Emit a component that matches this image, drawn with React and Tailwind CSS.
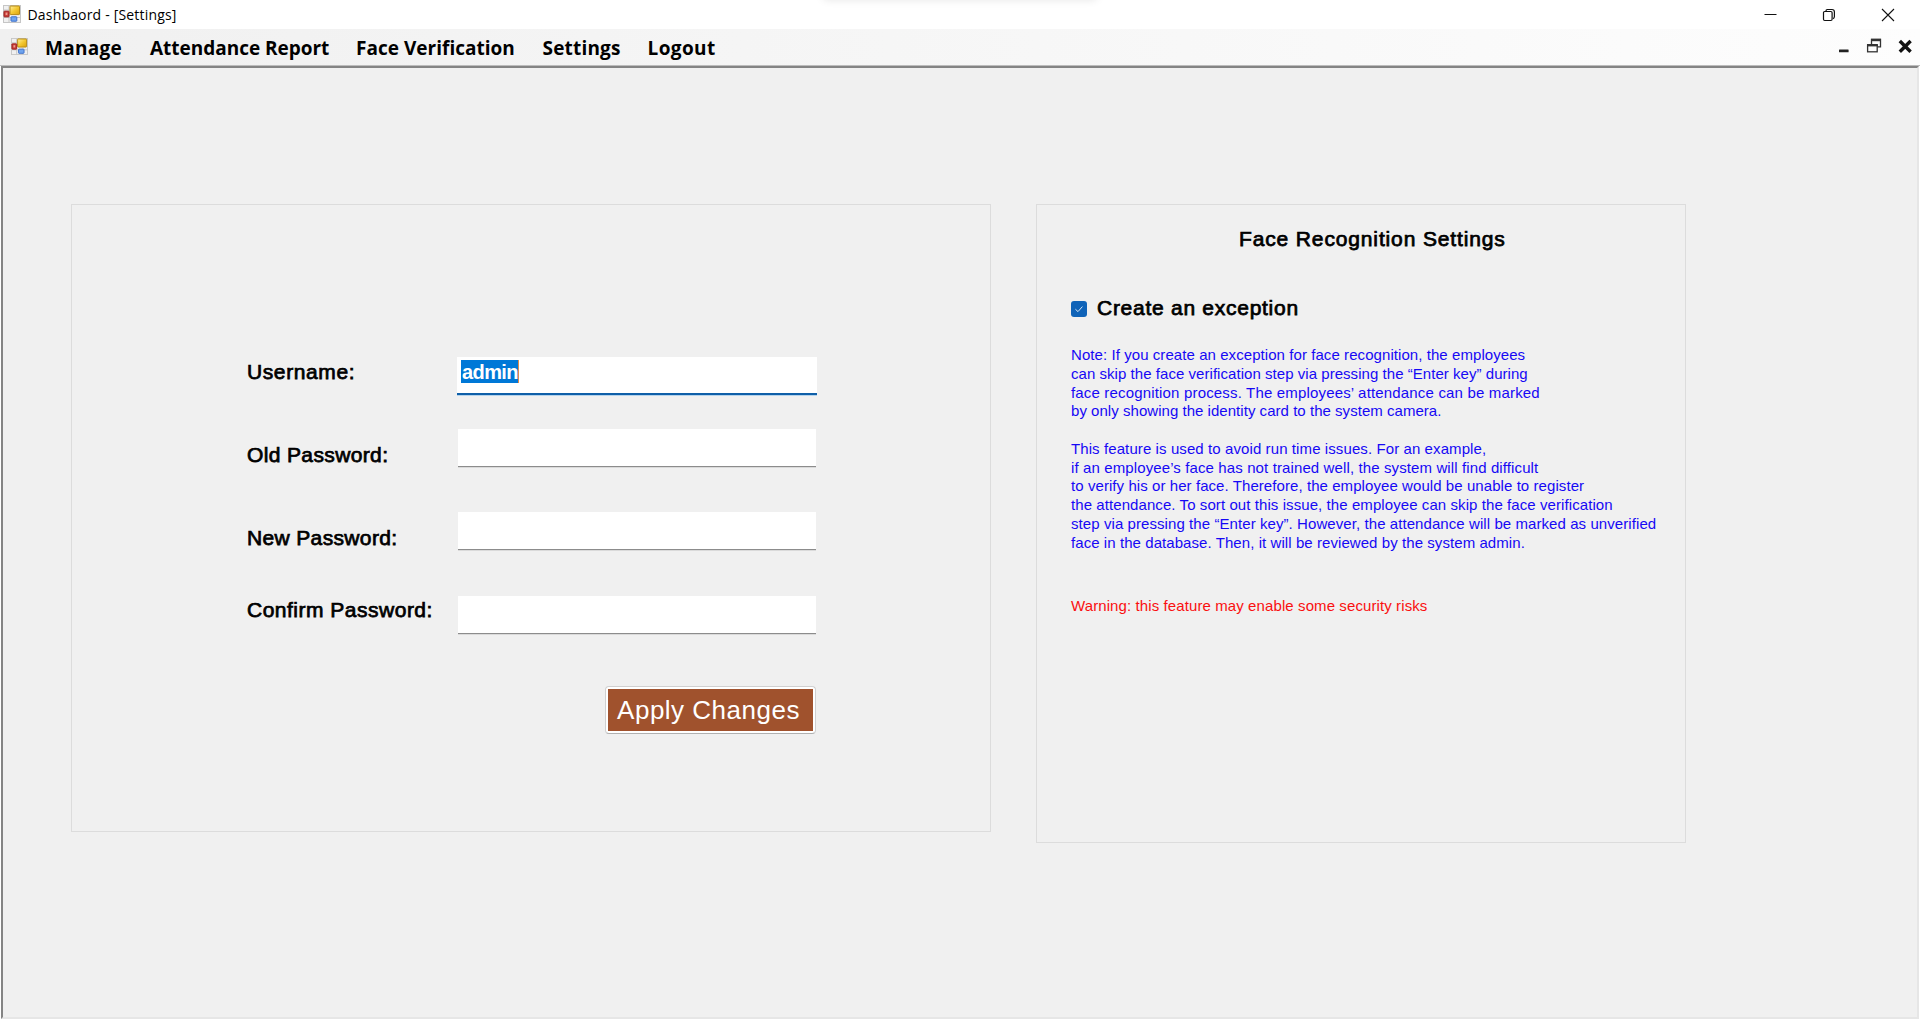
const FORM_TEXT =
  'font-["Liberation_Sans",Arial,sans-serif] text-[21px] leading-[30px] whitespace-pre [-webkit-text-stroke:0.75px_black]';

function FormIcon({ className }) {
  return (
    <svg viewBox="0 0 18 18" className={className}>
      <defs>
        <linearGradient id="gold" x1="0" y1="0" x2="1" y2="1">
          <stop offset="0" stopColor="#fff0a0" />
          <stop offset="0.5" stopColor="#f3c832" />
          <stop offset="1" stopColor="#d9a20c" />
        </linearGradient>
      </defs>
      <rect x="0.5" y="0.5" width="17" height="17" fill="#f0f0f0" stroke="#c6c6c6" />
      <path d="M6 0.5V17.5M12 11V17.5M0.5 12.5H17.5M0.5 5H7" stroke="#c6c6c6" fill="none" />
      <rect x="7" y="1" width="9.5" height="8.6" rx="0.6" fill="url(#gold)" stroke="#b78a12" />
      <rect x="1" y="6.2" width="5" height="5.6" rx="0.5" fill="#c8403a" stroke="#9e1f1f" />
      <rect x="2.6" y="7.6" width="1.8" height="2.4" fill="#ee9c90" />
      <rect x="8" y="11.8" width="5.8" height="4.4" rx="0.5" fill="#6fa4ee" stroke="#3b6fcb" />
    </svg>
  );
}

function TitleBar() {
  return (
    <header className="relative flex h-[29px] shrink-0 items-center overflow-hidden bg-white pl-[3px]">
      <div className="absolute top-[-12px] left-[822px] h-3 w-[276px] rounded-lg shadow-[0_0_8px_rgba(0,0,0,0.1)]" />
      <FormIcon className="mt-[-1px] h-[18px] w-[18px]" />
      <h1 className="ml-[6.5px] text-[14px] leading-[29px] tracking-[0.18px] whitespace-pre">Dashbaord - [Settings]</h1>
      <div className="ml-auto flex items-center pr-[25px]">
        <svg viewBox="0 0 14 14" className="mr-[45px] h-[14px] w-[14px]" fill="none" stroke="#111">
          <path d="M1.5 6.5H13.5" />
        </svg>
        <svg viewBox="0 0 14 14" className="mr-[45px] h-[14px] w-[14px]" fill="none" stroke="#111" strokeWidth="1.2">
          <rect x="1.5" y="3.5" width="8.6" height="9" rx="1.2" />
          <path d="M4 3V2.7Q4 1.5 5.3 1.5H10Q12.4 1.5 12.4 4V8.6Q12.4 10.4 11 10.6" />
        </svg>
        <svg viewBox="0 0 14 14" className="h-[14px] w-[14px]" fill="none" stroke="#111" strokeWidth="1.1">
          <path d="M1 1L13 13M13 1L1 13" />
        </svg>
      </div>
    </header>
  );
}

function MenuBar() {
  return (
    <nav className="flex h-9 shrink-0 bg-linear-to-r from-[#f0f0f0] to-[#fdfdfd] pl-[11px] text-[19px] leading-[39px] font-bold whitespace-pre">
      <FormIcon className="mt-[9px] h-[17px] w-[17px]" />
      <span className="ml-[17px] w-[105px] tracking-[0.3px]">Manage</span>
      <span className="w-[206px] tracking-[-0.02px]">Attendance Report</span>
      <span className="w-[186.5px] tracking-[0.02px]">Face Verification</span>
      <span className="w-[105px] tracking-[0.18px]">Settings</span>
      <span className="tracking-[0.4px]">Logout</span>
      <div className="mt-2 ml-auto flex pr-[7px]">
        <svg viewBox="0 0 16 18" className="mr-[14px] h-[18px] w-4" fill="#222">
          <rect x="3" y="12.6" width="9.6" height="2.6" rx="0.5" />
        </svg>
        <svg viewBox="0 0 16 18" className="mr-[15px] h-[18px] w-4" fill="none" stroke="#333" strokeWidth="1.3">
          <path d="M5.5 7.5V2.5H14.5V9.8H11.5" />
          <path d="M5 3H15" strokeWidth="2.4" />
          <rect x="1.6" y="8" width="9.6" height="6.8" />
          <path d="M1 8.2H11.8" strokeWidth="2.4" />
        </svg>
        <svg viewBox="0 0 16 18" className="h-[18px] w-4" fill="none" stroke="#111" strokeWidth="3.4">
          <path d="M2.8 4L13.6 14.8M13.6 4L2.8 14.8" />
        </svg>
      </div>
    </nav>
  );
}

function Field({ label, rowClass, labelClass, children, focused }) {
  return (
    <div className={`flex items-start ${rowClass}`}>
      <label className={`w-[211px] shrink-0 ${FORM_TEXT} ${labelClass}`}>{label}</label>
      {focused ? (
        <div className="-ml-px flex h-[38px] w-[360px] items-start border-b-2 border-[#0f5fa8] bg-white pt-[3px] pl-[4px] shadow-[0_1px_0_#b4d3ec]">
          {children}
        </div>
      ) : (
        <div className="h-[38px] w-[358px] border-b border-[#8c8c8c] bg-white shadow-[0_1px_0_#dadada]" />
      )}
    </div>
  );
}

function AccountPanel() {
  return (
    <section className="flex h-[628px] w-[920px] flex-col border border-[#dcdcdc] pt-[152px] pl-[175px]">
      <Field label="Username:" rowClass="h-[72px]" labelClass="tracking-[0.6px]" focused>
        <span className='h-[23px] w-[58px] border-r border-[#e08a4a] bg-[#0078d7] pl-px font-["Liberation_Sans",Arial,sans-serif] text-[20px] leading-[24px] font-bold tracking-[-0.6px] text-white'>
          admin
        </span>
      </Field>
      <Field label="Old Password:" rowClass="h-[83px]" labelClass="mt-[11px] tracking-[0.37px]" />
      <Field label="New Password:" rowClass="h-[84px]" labelClass="mt-[11px] tracking-[0.35px]" />
      <Field label="Confirm Password:" rowClass="h-[90px]" labelClass="mt-[-1px] tracking-[0.5px]" />
      <button className='ml-[358px] h-[48px] w-[211px] rounded-[4px] border border-[#d0d0d0] border-b-[#b0b0b0] bg-white p-[2px] font-["Liberation_Sans",Arial,sans-serif] text-[26px] text-white'>
        <span className="flex h-full items-center justify-center bg-[#a0522d] pt-px pr-1 tracking-[0.5px] whitespace-pre">Apply Changes</span>
      </button>
    </section>
  );
}

function RecognitionPanel() {
  return (
    <section className='ml-[45px] flex h-[639px] w-[650px] flex-col border border-[#dcdcdc] pt-[19px] pl-[34px] font-["Liberation_Sans",Arial,sans-serif] text-[15px] leading-[18.77px] whitespace-pre'>
      <h2 className={`ml-[168px] tracking-[0.86px] ${FORM_TEXT}`}>Face Recognition Settings</h2>
      <label className="mt-[39px] flex h-[30px] items-center">
        <span className="mt-px flex h-4 w-4 items-center justify-center rounded-[3px] bg-[#0f63b8]">
          <svg viewBox="0 0 12 12" className="h-3 w-3" fill="none" stroke="#d8e8f8">
            <path d="M2.4 6.2L5 8.6L9.4 3.6" />
          </svg>
        </span>
        <span className={`ml-[10px] tracking-[0.73px] ${FORM_TEXT}`}>Create an exception</span>
      </label>
      <div className="mt-[23px] text-[#1608f5]">
        <p className="tracking-[0.07px]">Note: If you create an exception for face recognition, the employees</p>
        <p className="tracking-[0.045px]">can skip the face verification step via pressing the “Enter key” during</p>
        <p className="tracking-[0.17px]">face recognition process. The employees’ attendance can be marked</p>
        <p className="tracking-[0.035px]">by only showing the identity card to the system camera.</p>
        <p className="mt-[18.77px] tracking-[0.095px]">This feature is used to avoid run time issues. For an example,</p>
        <p className="tracking-[0.115px]">if an employee’s face has not trained well, the system will find difficult</p>
        <p className="tracking-[0.072px]">to verify his or her face. Therefore, the employee would be unable to register</p>
        <p className="tracking-[0.08px]">the attendance. To sort out this issue, the employee can skip the face verification</p>
        <p className="tracking-[0.076px]">step via pressing the “Enter key”. However, the attendance will be marked as unverified</p>
        <p className="tracking-[0.07px]">face in the database. Then, it will be reviewed by the system admin.</p>
      </div>
      <p className="mt-[45px] tracking-[0.1px] text-[#fa0f0f]">Warning: this feature may enable some security risks</p>
    </section>
  );
}

export default function App() {
  return (
    <div className='flex h-[1020px] w-[1920px] flex-col overflow-hidden bg-white font-["Open_Sans","Noto_Sans",sans-serif] text-black'>
      <TitleBar />
      <MenuBar />
      <div className="h-px shrink-0 bg-[#bcbcbc]" />
      <main className="mr-px mb-px ml-px flex flex-1 items-start border-2 border-t-[#848484] border-r-[#e6e6e6] border-b-[#e6e6e6] border-l-[#848484] bg-[#f0f0f0] pt-[136px] pl-[68px]">
        <AccountPanel />
        <RecognitionPanel />
      </main>
    </div>
  );
}
